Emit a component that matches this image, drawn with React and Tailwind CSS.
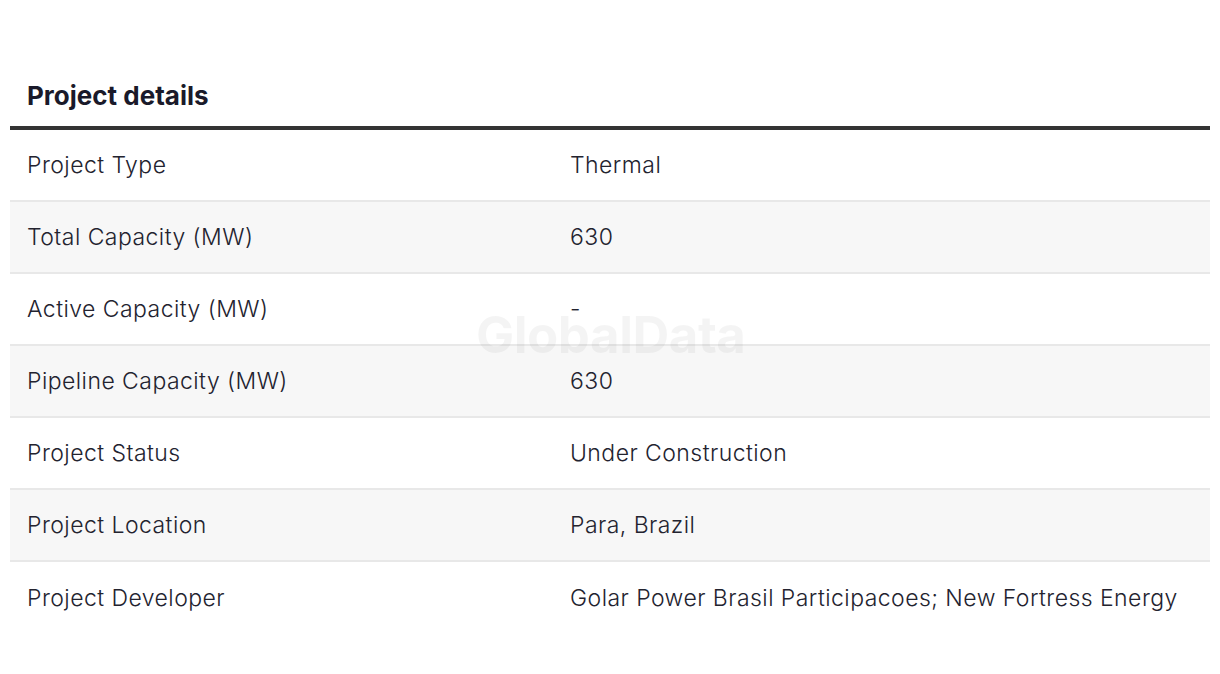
import React from "react";

const rows = [
  ["Project Type", "Thermal"],
  ["Total Capacity (MW)", "630"],
  ["Active Capacity (MW)", "-"],
  ["Pipeline Capacity (MW)", "630"],
  ["Project Status", "Under Construction"],
  ["Project Location", "Para, Brazil"],
  ["Project Developer", "Golar Power Brasil Participacoes; New Fortress Energy"],
];

export default function App() {
  return (
    <div className="w-[1220px] h-[674px] bg-white px-[10px] pt-[78px] text-[#23232f]" style={{ fontFamily: "Inter, 'Noto Sans', sans-serif" }}>
      <h2 className="px-[17px] pt-[2px] text-[26px] font-bold leading-[32px] h-[48px] text-[#1a1a2a]">Project details</h2>
      <div className="relative border-t-4 border-[#333333]">
        {rows.map(([k, v], i) => (
          <div
            key={k}
            className={`flex h-[72px] items-center text-[23px] font-light tracking-[0.45px] ${i % 2 === 1 ? "bg-[#f7f7f7]" : "bg-transparent"} ${i < rows.length - 1 ? "border-b-2 border-[#e8e8e8]" : ""}`}
          >
            <div className="w-[560px] pl-[17px]">{k}</div>
            <div>{v}</div>
          </div>
        ))}
        <div className="pointer-events-none absolute left-[466px] top-[179px] text-[51px] font-bold tracking-[-0.5px] text-black/[0.045] leading-none select-none">GlobalData</div>
      </div>
    </div>
  );
}
